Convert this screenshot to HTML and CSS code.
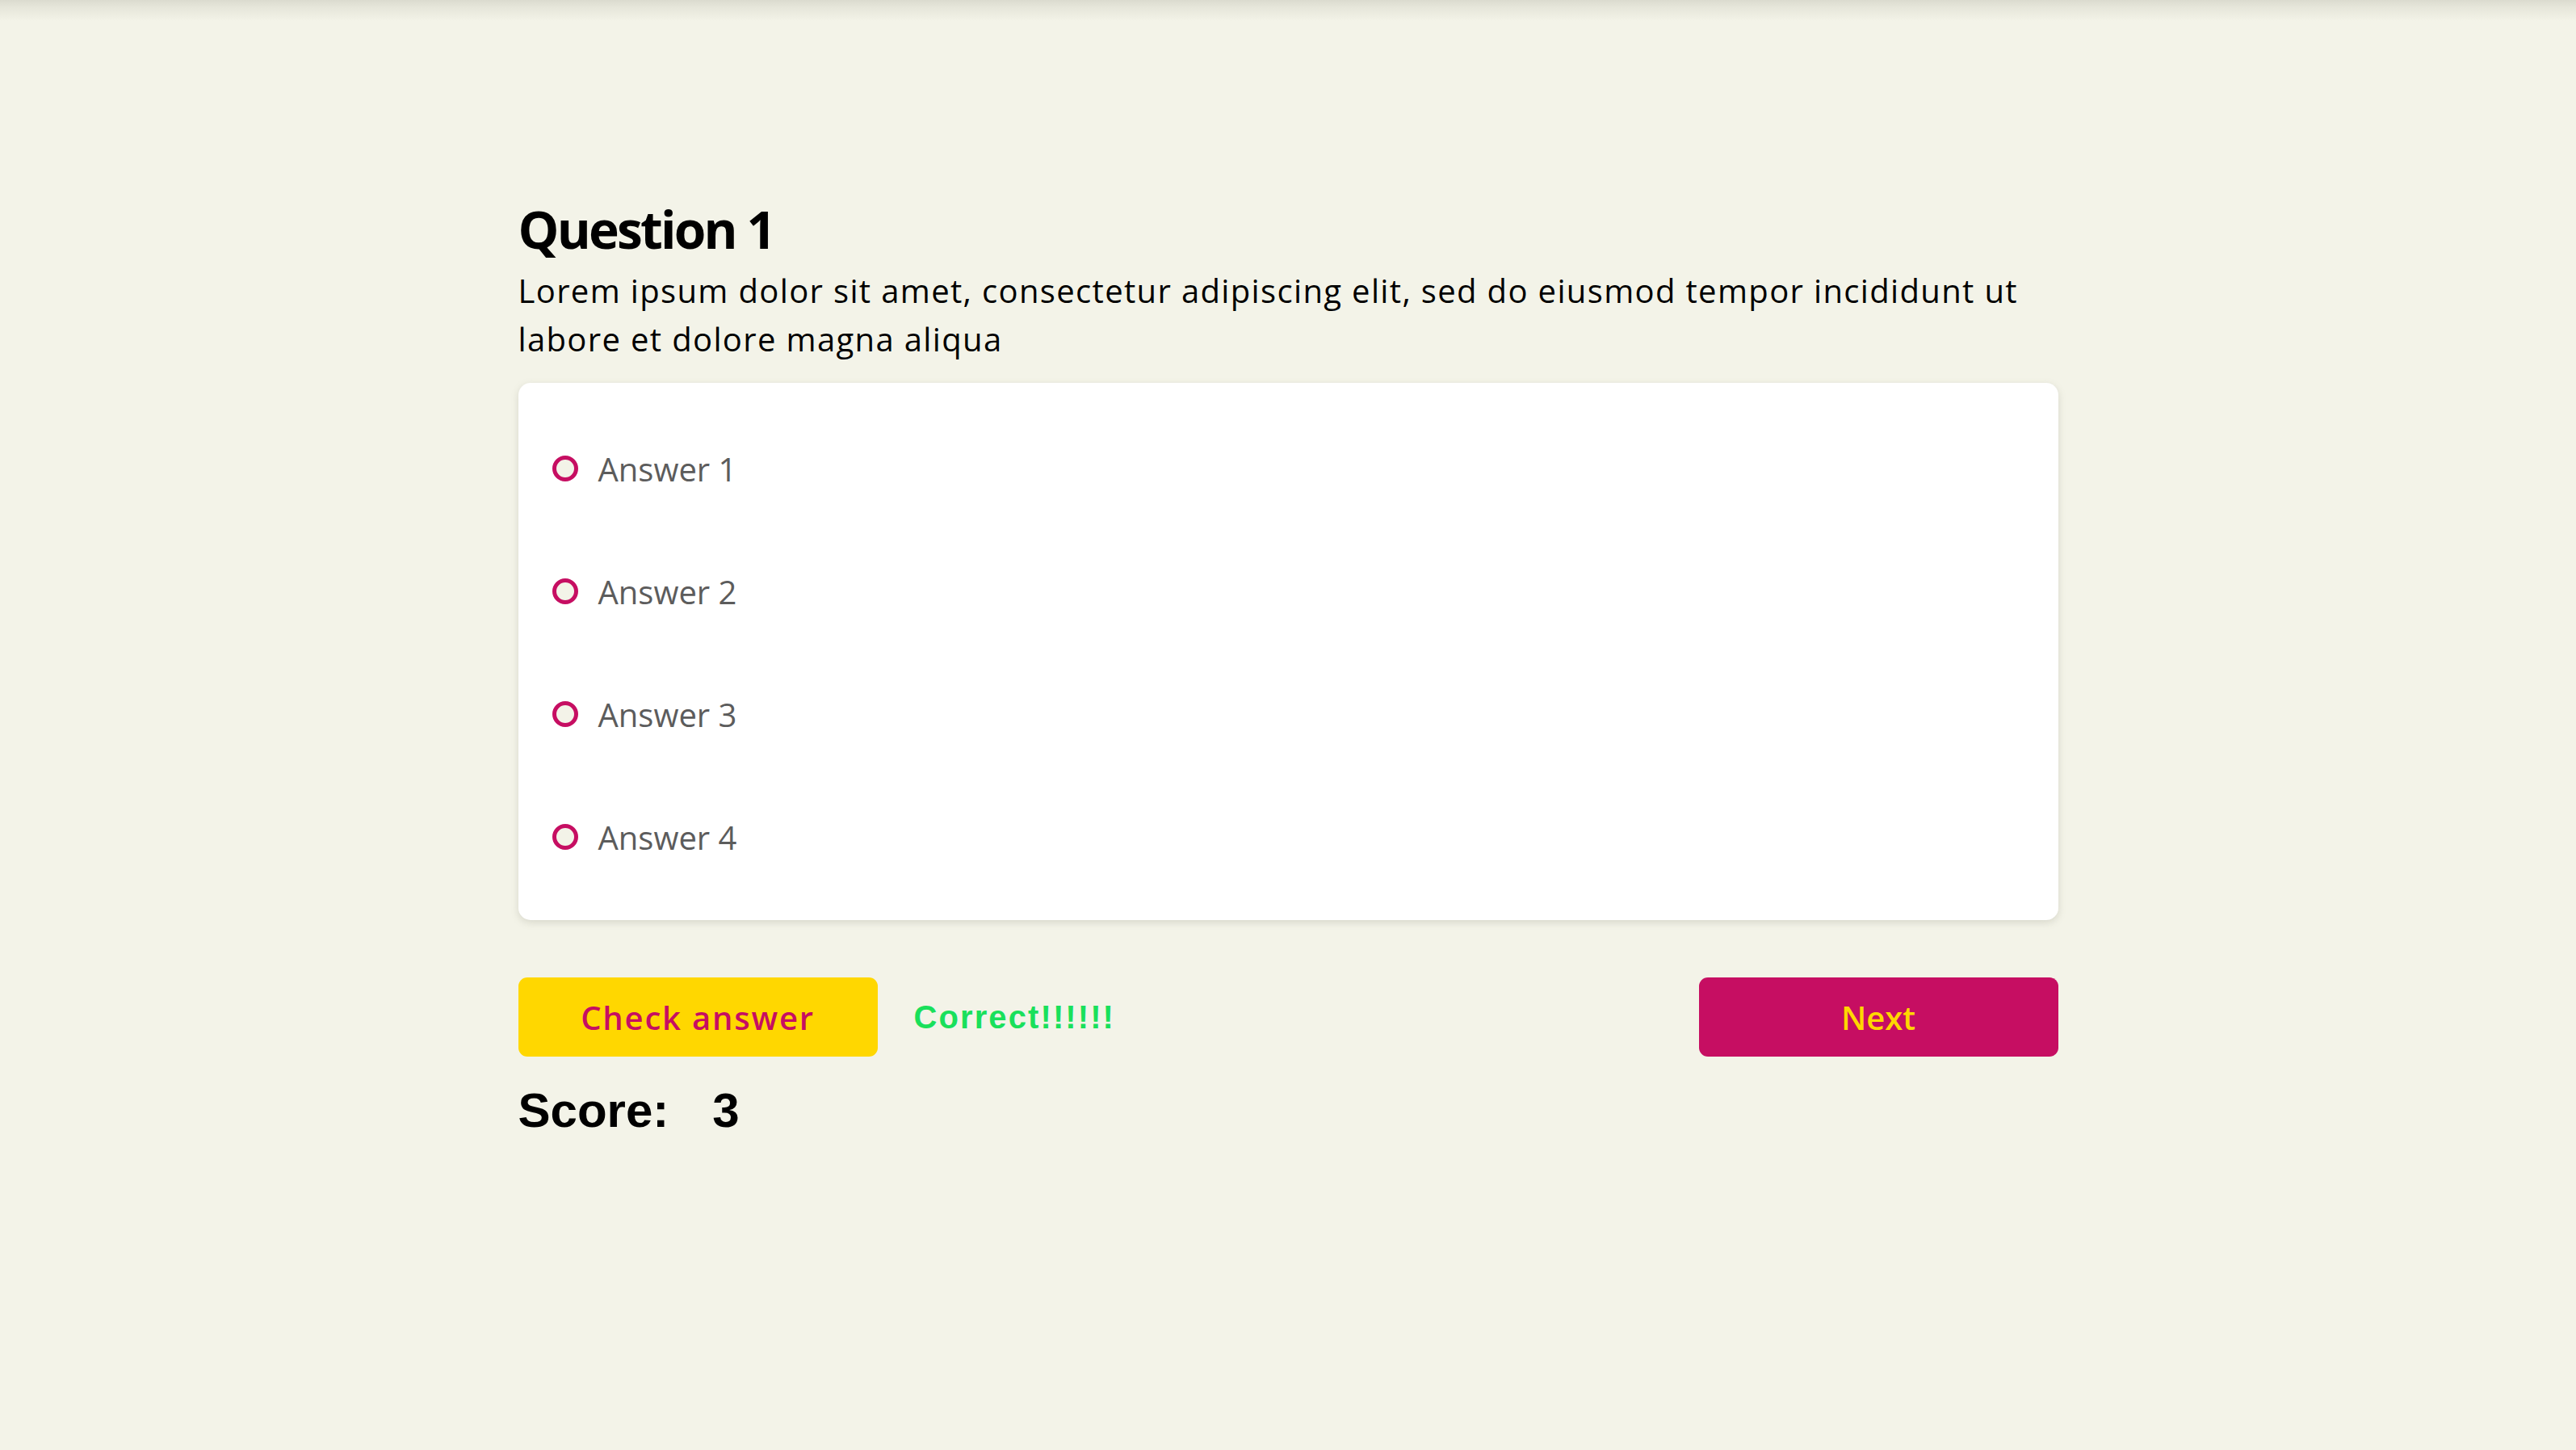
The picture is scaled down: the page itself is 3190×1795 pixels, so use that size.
FILE: index.html
```html
<!DOCTYPE html>
<html lang="en">
<head>
<meta charset="utf-8">
<title>Quiz</title>
<link rel="stylesheet" href="styles.css">
</head>
<body>
<div class="top-shade"></div>
<main class="quiz">
  <h1 class="q-title">Question 1</h1>
  <p class="q-text">Lorem ipsum dolor sit amet, consectetur adipiscing elit, sed do eiusmod tempor incididunt ut labore et dolore magna aliqua</p>
  <div class="card">
    <label class="answer"><span class="radio"></span><span class="answer-label">Answer 1</span></label>
    <label class="answer"><span class="radio"></span><span class="answer-label">Answer 2</span></label>
    <label class="answer"><span class="radio"></span><span class="answer-label">Answer 3</span></label>
    <label class="answer"><span class="radio"></span><span class="answer-label">Answer 4</span></label>
  </div>
  <div class="actions">
    <button class="btn btn-check">Check answer</button>
    <span class="feedback">Correct!!!!!!</span>
    <button class="btn btn-next">Next</button>
  </div>
  <div class="score"><span>Score:</span><span class="score-value">3</span></div>
</main>
</body>
</html>
```
FILE: styles.css
```css
html, body {
  margin: 0;
  padding: 0;
}
body {
  background: #f3f3e8;
  font-family: "Open Sans", "Noto Sans", sans-serif;
  color: #000;
  min-height: 1795px;
}
.top-shade {
  height: 26px;
  background: linear-gradient(to bottom, #dbdbcf 0%, #e6e6da 35%, #f3f3e8 100%);
}
.quiz {
  width: 1907px;
  margin: 0 auto;
  padding-top: 220px;
}
.q-title {
  margin: 0;
  font-size: 64px;
  line-height: 76px;
  font-weight: 700;
  letter-spacing: -2.8px;
}
.q-text {
  margin: 8px 0 0;
  font-size: 40px;
  line-height: 60px;
  font-weight: 400;
  letter-spacing: 1.35px;
}
.card {
  margin-top: 24px;
  background: #fff;
  border-radius: 15px;
  box-shadow: 0 3px 10px rgba(120, 120, 100, 0.22);
  padding: 30px 42px 27px;
  display: flex;
  flex-direction: column;
}
.answer {
  height: 152px;
  display: flex;
  align-items: center;
  gap: 25px;
}
.radio {
  width: 32px;
  height: 32px;
  box-sizing: border-box;
  border: 5px solid #c60e62;
  border-radius: 50%;
  background: #f3f3e8;
  flex: none;
}
.answer-label {
  font-size: 40px;
  color: #5c5c5c;
}
.actions {
  margin-top: 71px;
  display: flex;
  align-items: center;
}
.btn {
  width: 445px;
  height: 98px;
  border: none;
  border-radius: 11px;
  font-family: "Open Sans", "Noto Sans", sans-serif;
  font-size: 40px;
  font-weight: 600;
  padding: 0;
}
.btn-check {
  background: #ffd700;
  color: #c60e62;
  letter-spacing: 1.8px;
}
.btn-next {
  margin-left: auto;
  background: #c60e62;
  color: #ffd700;
}
.feedback {
  margin-left: 45px;
  font-family: "Liberation Sans", Arial, sans-serif;
  font-weight: 700;
  font-size: 40px;
  letter-spacing: 2.1px;
  color: #19e05b;
}
.score {
  margin-top: 32px;
  display: flex;
  gap: 54px;
  font-family: "Liberation Sans", Arial, sans-serif;
  font-weight: 700;
  font-size: 60px;
  line-height: 70px;
}
```
